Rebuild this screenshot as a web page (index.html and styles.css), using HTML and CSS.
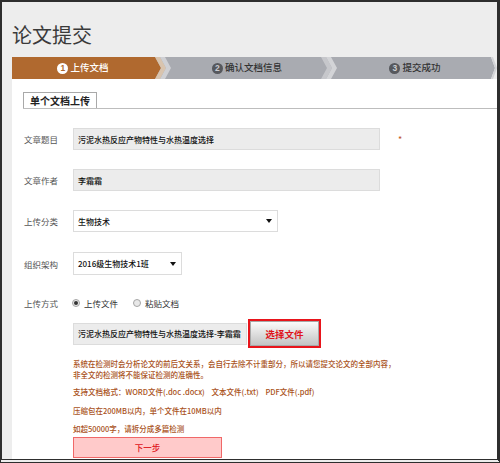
FILE: index.html
```html
<!DOCTYPE html>
<html lang="zh-CN">
<head>
<meta charset="utf-8">
<title>论文提交</title>
<link rel="stylesheet" href="styles.css">
</head>
<body>
<div class="frame">
  <h1 class="title">论文提交</h1>
  <div class="steps">
    <div class="step s1"><span class="num">1</span><span>上传文档</span></div>
    <svg class="sep" viewBox="0 0 20 22" width="20" height="22">
      <rect x="0" y="0" width="20" height="22" fill="#a9abb1"/>
      <polygon points="0,0 1,0 7,11 1,22 0,22" fill="#b0692f"/>
      <polygon points="1,0 6,0 12,11 6,22 1,22 7,11" fill="#d9c4ae"/>
      <polygon points="6,0 11,0 17,11 11,22 6,22 12,11" fill="#cfd0d4"/>
    </svg>
    <div class="step s2"><span class="num">2</span><span>确认文档信息</span></div>
    <svg class="sep" viewBox="0 0 20 22" width="20" height="22">
      <rect x="0" y="0" width="20" height="22" fill="#a9abb1"/>
      <polygon points="1,0 6,0 12,11 6,22 1,22 7,11" fill="#c6c7cb"/>
      <polygon points="6,0 11,0 17,11 11,22 6,22 12,11" fill="#d3d4d7"/>
    </svg>
    <div class="step s3"><span class="num">3</span><span>提交成功</span></div>
    <svg class="sep end" viewBox="0 0 7 22" width="7" height="22">
      <polygon points="0,0 1,0 5,11 1,22 0,22" fill="#a9abb1"/>
      <polygon points="1,0 3,0 7,11 3,22 1,22 5,11" fill="#d3d4d7"/>
    </svg>
  </div>
  <div class="panel">
    <div class="tabs"><div class="tab">单个文档上传</div></div>

    <div class="row r1">
      <span class="label">文章题目</span>
      <div class="field long">污泥水热反应产物特性与水热温度选择</div>
      <span class="star">*</span>
    </div>
    <div class="row r2">
      <span class="label">文章作者</span>
      <div class="field long">李霜霜</div>
    </div>
    <div class="row r3">
      <span class="label">上传分类</span>
      <div class="select wide"><span>生物技术</span>
        <svg class="arrow" viewBox="0 0 6 4" width="6" height="4"><polygon points="0,0 6,0 3,4" fill="#111"/></svg>
      </div>
    </div>
    <div class="row r4">
      <span class="label">组织架构</span>
      <div class="select short"><span>2016级生物技术1班</span>
        <svg class="arrow" viewBox="0 0 6 4" width="6" height="4"><polygon points="0,0 6,0 3,4" fill="#111"/></svg>
      </div>
    </div>
    <div class="row r5">
      <span class="label">上传方式</span>
      <div class="radios">
        <span class="radio"><span class="dot on"></span>上传文件</span>
        <span class="radio"><span class="dot"></span>粘贴文档</span>
      </div>
    </div>
    <div class="row r6">
      <span class="label"></span>
      <div class="field file">污泥水热反应产物特性与水热温度选择-李霜霜</div>
      <div class="choose"><span>选择文件</span></div>
    </div>

    <div class="notes">
      <p class="n1">系统在检测时会分析论文的前后文关系，会自行去除不计重部分，所以请您提交论文的全部内容，<br>非全文的检测将不能保证检测的准确性。</p>
      <p class="n2">支持文档格式：WORD文件(.doc .docx)&nbsp;&nbsp;&nbsp;&nbsp;文本文件(.txt)&nbsp;&nbsp;&nbsp;&nbsp;PDF文件(.pdf)</p>
      <p class="n3">压缩包在200MB以内，单个文件在10MB以内</p>
      <p class="n4">如超50000字，请拆分成多篇检测</p>
      <div class="next">下一步</div>
    </div>
  </div>
</div>
</body>
</html>
```

FILE: styles.css
```css
* { box-sizing: border-box; margin: 0; padding: 0; }
html, body { width: 500px; height: 463px; overflow: hidden; }
body {
  font-family: "Noto Sans CJK SC", "Liberation Sans", sans-serif;
  background: #fff;
}
.frame {
  width: 500px;
  height: 463px;
  border: 2px solid #2e2e2e;
  border-right-width: 3px;
  border-bottom: 4px double #2e2e2e;
  background: #ededed;
  padding-left: 10px;
  display: flex;
  flex-direction: column;
}
.title {
  font-size: 20px;
  line-height: 20px;
  font-weight: normal;
  color: #3a3a3a;
  padding-top: 23px;
  height: 55px;
  flex: none;
}
.steps { display: flex; height: 22px; flex: none; }
.step {
  display: flex;
  align-items: center;
  justify-content: center;
  gap: 2px;
  font-size: 9.5px;
  font-weight: 500;
  line-height: 1;
  height: 22px;
}
.s1 { width: 142px; background: #b0692f; color: #fff; }
.s2 { width: 146px; background: #a9abb1; color: #333; }
.s3 { width: 150px; background: #a9abb1; color: #333; }
.sep { display: block; flex: none; width: 20px; height: 22px; }
.sep.end { width: 7px; }
.num {
  width: 11px;
  height: 11px;
  border-radius: 50%;
  display: inline-flex;
  align-items: center;
  justify-content: center;
  font-family: "Liberation Sans", sans-serif;
  font-size: 8.5px;
  font-weight: bold;
  line-height: 1;
}
.s1 .num { background: #fff; color: #b0692f; }
.s2 .num, .s3 .num { background: #56585d; color: #cbccd0; }

.panel {
  flex: 1;
  background: #fff;
  padding: 13px 0 0 11px;
  overflow: hidden;
}
.tabs { display: flex; border-bottom: 1px solid #bdbdbd; height: 17px; }
.tab {
  width: 74px;
  height: 16px;
  border: 1px solid #a9a9a9;
  border-bottom: none;
  background: #fff;
  font-size: 10px;
  font-weight: bold;
  color: #222;
  display: flex;
  align-items: center;
  justify-content: center;
  line-height: 1;
}

.row { display: flex; align-items: center; height: 22px; }
.r1 { margin-top: 19px; }
.r2 { margin-top: 19px; }
.r3 { margin-top: 19px; }
.r4 { margin-top: 20px; height: 23px; }
.r5 { margin-top: 17px; }
.r6 { margin-top: 5px; height: 29px; }

.label {
  width: 50px;
  flex: none;
  font-size: 8.5px;
  color: #555;
  padding-left: 1px;
}
.field {
  height: 22px;
  border: 1px solid #dcdcdc;
  background: #ececec;
  padding-left: 4px;
  font-size: 8px;
  font-weight: 500;
  color: #111;
  display: flex;
  align-items: center;
  white-space: nowrap;
}
.field.long { width: 307px; }
.field.file { width: 174px; }
.star { margin-left: 18px; font-size: 9px; color: #c0561c; }

.select {
  height: 100%;
  border: 1px solid #dcdcdc;
  background: #fff;
  display: flex;
  align-items: center;
  justify-content: space-between;
  padding: 0 5px 0 4px;
  font-size: 8px;
  font-weight: 500;
  color: #111;
}
.select.wide { width: 205px; }
.select.short { width: 109px; }
.arrow { display: block; }

.radios { display: flex; align-items: center; gap: 15px; margin-left: -1px; }
.radio {
  display: flex;
  align-items: center;
  gap: 4px;
  font-size: 8.5px;
  color: #333;
}
.dot {
  width: 8px;
  height: 8px;
  border-radius: 50%;
  border: 1px solid #a5a5a5;
  background: #e8e8e8;
  display: flex;
  align-items: center;
  justify-content: center;
}
.dot.on::after {
  content: "";
  width: 4px;
  height: 4px;
  border-radius: 50%;
  background: #333;
}

.choose {
  margin-left: 1px;
  width: 73px;
  height: 29px;
  border: 2px solid #e8141b;
  display: flex;
}
.choose span {
  flex: 1;
  display: flex;
  align-items: center;
  justify-content: center;
  background: linear-gradient(#fbfbfb, #d9d9d9 60%, #c4c4c4);
  border: 1px solid #a8a8a8;
  color: #e0141b;
  font-size: 9.5px;
  font-weight: bold;
}

.notes {
  padding-left: 50px;
  margin-top: 9.5px;
  color: #a9521a;
  font-size: 7.5px;
  font-weight: 500;
  line-height: 11px;
  white-space: nowrap;
}
.n2 { margin-top: 6px; }
.n3 { margin-top: 8px; }
.n4 { margin-top: 7px; }
.next {
  margin-top: 3.5px;
  width: 149px;
  height: 21px;
  background: #ffcaca;
  border: 1px solid #f06868;
  color: #e0141b;
  font-size: 8.5px;
  display: flex;
  align-items: center;
  justify-content: center;
}
```
